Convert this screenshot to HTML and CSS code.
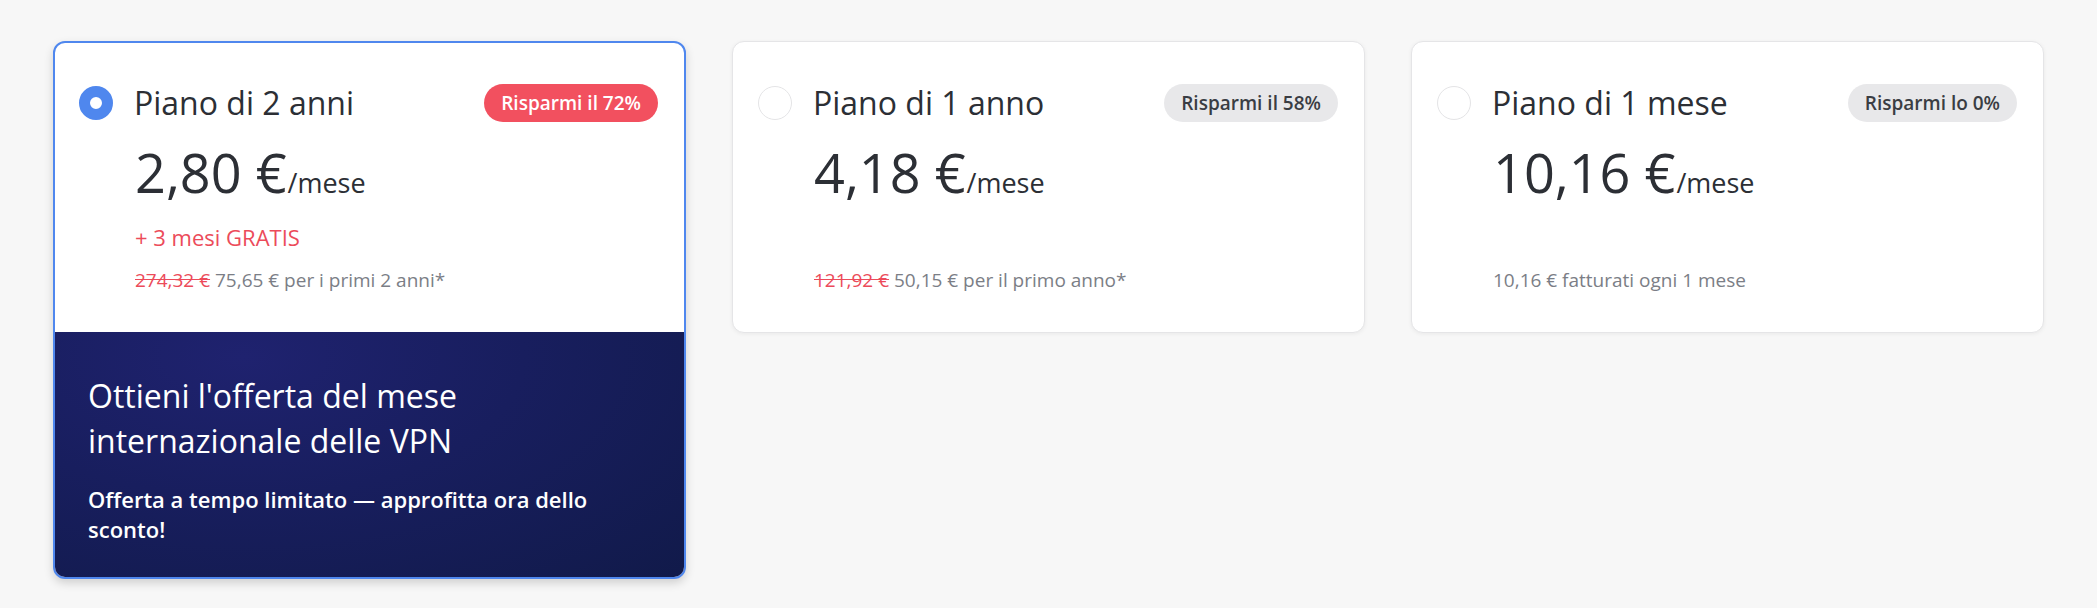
FILE: index.html
```html
<!DOCTYPE html>
<html lang="it">
<head>
    <meta charset="UTF-8">
    <meta name="viewport" content="width=device-width, initial-scale=1.0">
    <title>Piani VPN</title>
    <link rel="stylesheet" href="styles.css">
</head>
<body>

    <main class="plans">
        <!-- Piano selezionato -->
        <div class="card selected">
            <div class="card-body">
                <div class="plan-head">
                    <span class="radio checked"></span>
                    <h2 class="plan-name">Piano di 2 anni</h2>
                    <span class="badge hot">Risparmi il 72%</span>
                </div>
                <p class="price"><span class="amount">2,80 €</span><span class="unit">/mese</span></p>
                <p class="gift">+ 3 mesi GRATIS</p>
                <p class="note"><s class="old">274,32 €</s> 75,65 € per i primi 2 anni*</p>
            </div>
            <div class="promo">
                <h3 class="promo-title">Ottieni l'offerta del mese internazionale delle VPN</h3>
                <p class="promo-text">Offerta a tempo limitato — approfitta ora dello sconto!</p>
            </div>
        </div>

        <div class="card">
            <div class="card-body">
                <div class="plan-head">
                    <span class="radio"></span>
                    <h2 class="plan-name">Piano di 1 anno</h2>
                    <span class="badge">Risparmi il 58%</span>
                </div>
                <p class="price"><span class="amount">4,18 €</span><span class="unit">/mese</span></p>
                <p class="gift"></p>
                <p class="note"><s class="old">121,92 €</s> 50,15 € per il primo anno*</p>
            </div>
        </div>

        <div class="card">
            <div class="card-body">
                <div class="plan-head">
                    <span class="radio"></span>
                    <h2 class="plan-name">Piano di 1 mese</h2>
                    <span class="badge">Risparmi lo 0%</span>
                </div>
                <p class="price"><span class="amount">10,16 €</span><span class="unit">/mese</span></p>
                <p class="gift"></p>
                <p class="note">10,16 € fatturati ogni 1 mese</p>
            </div>
        </div>
    </main>

</body>
</html>
```

FILE: styles.css
```css
/* General Styles */
body {
    font-family: "Open Sans", "Noto Sans", sans-serif;
    margin: 0;
    background-color: #f7f7f7;
    color: #2f3237;
}

.plans {
    display: grid;
    grid-template-columns: repeat(3, 1fr);
    gap: 46px;
    align-items: start;
    padding: 41px 53px;
}

/* Cards */
.card {
    background: white;
    border: 1px solid #e5e5e7;
    border-radius: 12px;
    overflow: hidden;
    box-shadow: 0px 1px 4px rgba(0, 0, 0, 0.06);
}

.card.selected {
    border: 2px solid #4f87ee;
    box-shadow: 0px 4px 10px rgba(0, 0, 0, 0.16);
}

.card-body {
    padding: 42px 26px 40px 25px;
}

.card.selected .card-body {
    padding-top: 41px;
    padding-left: 24px;
}

.plan-head {
    display: flex;
    align-items: center;
    height: 38px;
}

.radio {
    width: 32px;
    height: 32px;
    border-radius: 50%;
    border: 1px solid #e4e4e6;
    background: white;
    box-sizing: content-box;
    flex-shrink: 0;
}

.radio.checked {
    border: 11px solid #4f87ee;
    width: 12px;
    height: 12px;
}

.plan-name {
    margin: 0 0 0 21px;
    font-size: 32px;
    line-height: 38px;
    font-weight: 400;
    color: #2c2f35;
}

.badge {
    margin-left: auto;
    height: 38px;
    line-height: 38px;
    padding: 0 17px;
    border-radius: 19px;
    background: #e8e8ea;
    color: #3a3d43;
    font-size: 19px;
    font-weight: 600;
}

.badge.hot {
    background: #f2505f;
    color: white;
}

/* Price */
.price {
    margin: 20px 0 0 56px;
    height: 60px;
    line-height: 60px;
    color: #2c2f35;
}

.amount {
    font-size: 54px;
}

.unit {
    font-size: 27px;
    line-height: 1;
    margin-left: 1px;
}

.gift {
    margin: 21px 0 0 56px;
    height: 28px;
    line-height: 28px;
    font-size: 22px;
    color: #ec4b5a;
}

.note {
    margin: 17px 0 0 56px;
    line-height: 24px;
    font-size: 19px;
    color: #7b7e86;
}

.old {
    color: #ec4b5a;
}

/* Promo block */
.promo {
    background: radial-gradient(ellipse at 30% 10%, #1f226f 0%, #181e5e 45%, #111a4a 100%);
    color: white;
    padding: 41px 33px 33px;
}

.promo-title {
    margin: 0;
    font-size: 32px;
    line-height: 45px;
    font-weight: 500;
    max-width: 440px;
}

.promo-text {
    margin: 21px 0 0;
    font-size: 22px;
    line-height: 30px;
    font-weight: 600;
    max-width: 520px;
}
```
